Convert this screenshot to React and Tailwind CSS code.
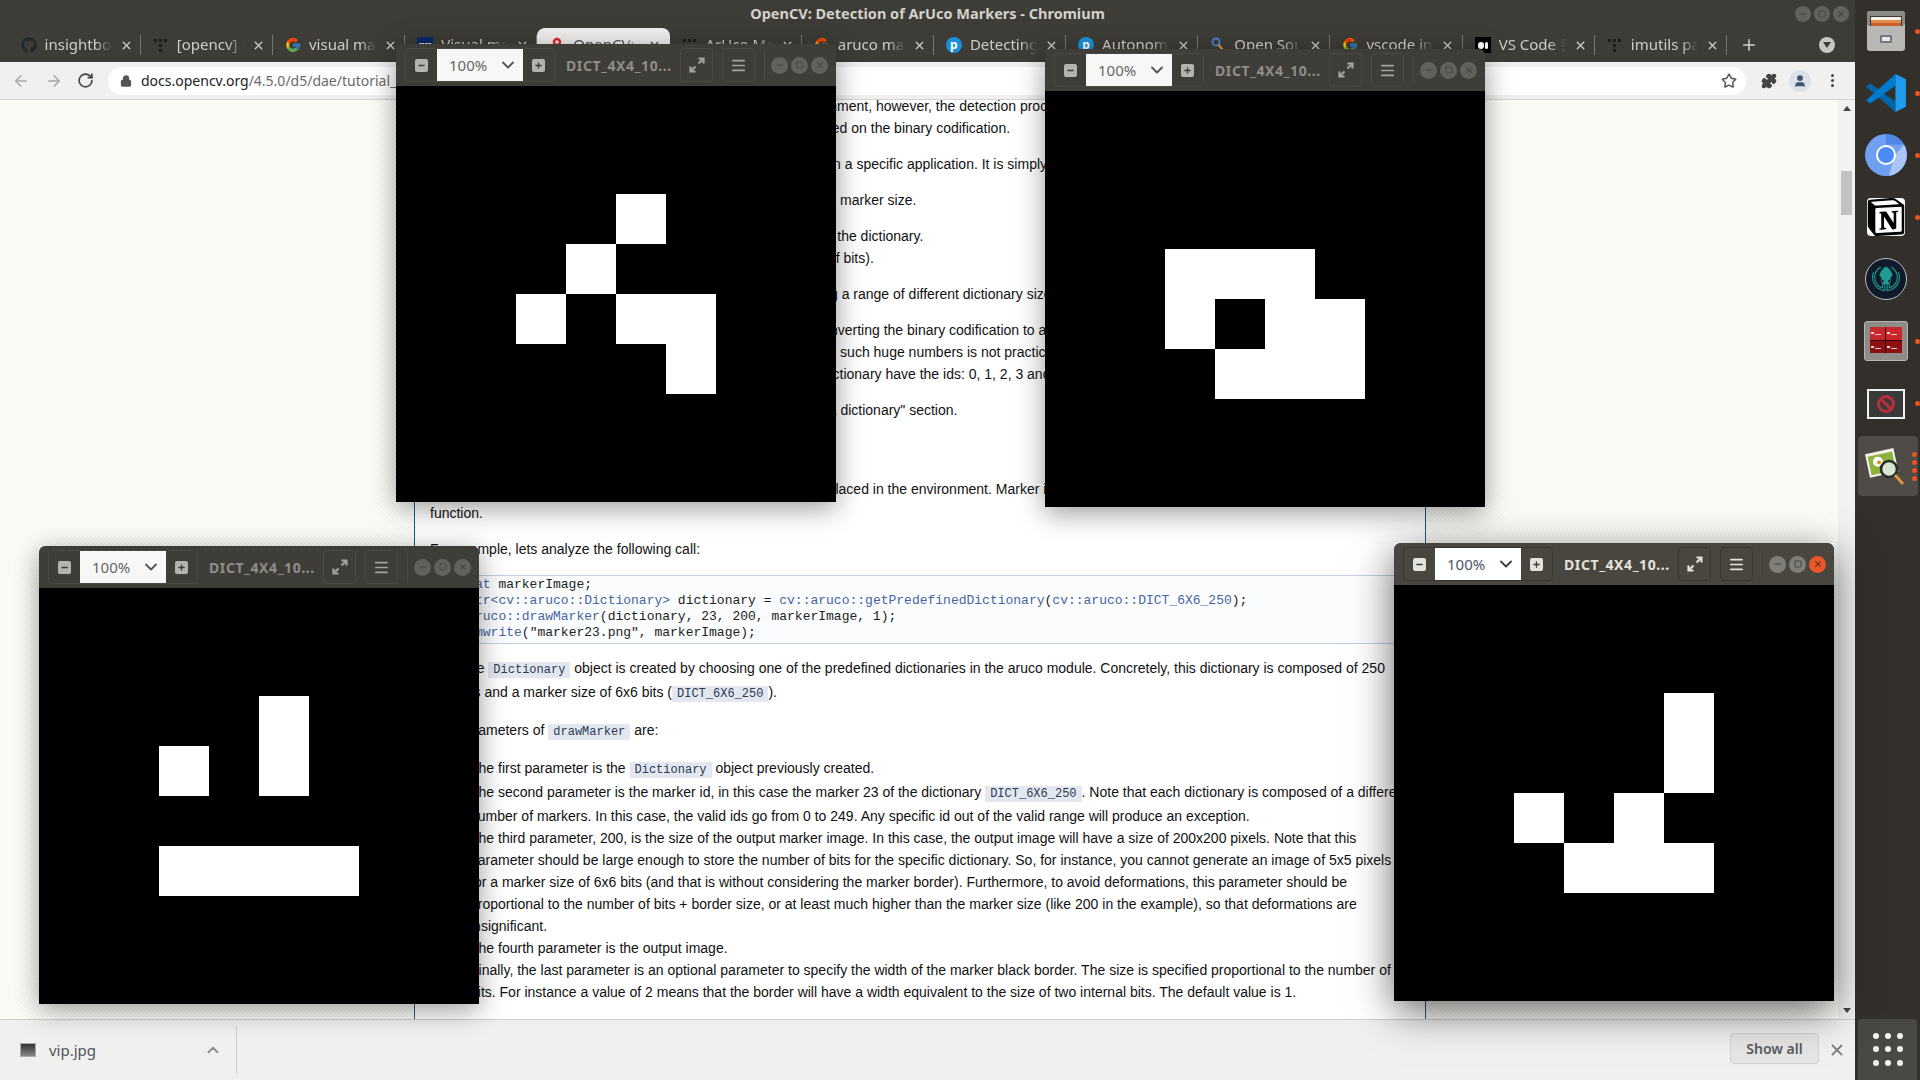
import { ArrowLeft, ArrowRight, RotateCw, Lock, Star, Puzzle, X, Plus, ChevronDown, ChevronUp, Minus, Menu, Square, User } from "lucide-react";
import { FaGithub } from "react-icons/fa";
import { FcGoogle } from "react-icons/fc";
import { SiNotion, SiGitkraken } from "react-icons/si";

const DotsIcon = () => (
  <svg width="16" height="16" viewBox="0 0 16 16" fill="#1c1c1c">
    <rect x="1" y="2" width="3" height="3" />
    <rect x="6" y="2" width="3" height="3" />
    <rect x="11" y="2" width="3" height="3" />
    <rect x="6" y="7" width="3" height="3" />
    <rect x="6" y="12" width="3" height="3" />
  </svg>
);

const IeeeIcon = () => (
  <div className="w-4 h-4 bg-[#0b2a6b] text-white text-[6px] font-bold leading-4 text-center">IEEE</div>
);

const OpencvIcon = () => (
  <svg width="16" height="16" viewBox="0 0 16 16">
    <circle cx="8" cy="5" r="3" fill="none" stroke="#e3242b" strokeWidth="2.4" />
    <circle cx="4.5" cy="11" r="2.4" fill="none" stroke="#2eb24c" strokeWidth="2" />
    <circle cx="11.5" cy="11" r="2.4" fill="none" stroke="#2a6fd6" strokeWidth="2" />
  </svg>
);

const PIcon = () => (
  <div className="w-4 h-4 rounded-full bg-[#1a8fd8] text-white text-[12px] font-bold leading-[15px] text-center">p</div>
);

const PinIcon = () => (
  <svg width="16" height="16" viewBox="0 0 16 16">
    <circle cx="6" cy="5" r="3.5" fill="none" stroke="#4a80c8" strokeWidth="2" />
    <path d="M8.5 8 L14 14" stroke="#d9a441" strokeWidth="2" />
  </svg>
);

const MediumIcon = () => (
  <div className="w-4 h-4 bg-black flex items-center justify-center gap-px">
    <span className="w-[6px] h-[7px] rounded-full bg-white" />
    <span className="w-[3px] h-[7px] rounded-full bg-white" />
  </div>
);

const FullscreenIcon = () => (
  <svg width="18" height="18" viewBox="0 0 18 18" fill="none" stroke="currentColor" strokeWidth="2.2">
    <path d="M10.5 2.5 H15.5 V7.5" />
    <path d="M15 3 L10.5 7.5" />
    <path d="M2.5 10.5 V15.5 H7.5" />
    <path d="M3 15 L7.5 10.5" />
  </svg>
);

const tabs = [
  { icon: <FaGithub size={16} color="#22272e" />, title: "insightboard" },
  { icon: <DotsIcon />, title: "[opencv] Ins" },
  { icon: <FcGoogle size={16} />, title: "visual marker" },
  { icon: <IeeeIcon />, title: "Visual marker" },
  { icon: <OpencvIcon />, title: "OpenCV: Det", active: true },
  { icon: <DotsIcon />, title: "ArUco Marker" },
  { icon: <FcGoogle size={16} />, title: "aruco marker" },
  { icon: <PIcon />, title: "Detecting Ar" },
  { icon: <PIcon />, title: "Autonomous" },
  { icon: <PinIcon />, title: "Open Source" },
  { icon: <FcGoogle size={16} />, title: "vscode insta" },
  { icon: <MediumIcon />, title: "VS Code 문서" },
  { icon: <DotsIcon />, title: "imutils pack" },
];

const Code = ({ children }) => (
  <code className="bg-[#e3e7f0] px-[5px] py-px text-[12px] leading-none text-[#2b3a55] font-['Liberation_Mono',monospace]">{children}</code>
);

const Link = ({ children }) => <span className="text-[#4665a2]">{children}</span>;

function BrowserTab({ tab }) {
  return (
    <div className={`w-[132.2px] h-[34px] shrink-0 flex items-center pl-[12px] ${tab.active ? "bg-[#f1f0ee] rounded-t-lg text-[#4a4a4a]" : "text-[#cfcdc7]"}`}>
      <div className="w-4 h-4 shrink-0">{tab.icon}</div>
      <div className="ml-2 -mt-[2px] w-[67px] shrink-0 overflow-hidden whitespace-nowrap text-[15px] [mask-image:linear-gradient(to_right,black_75%,transparent)]">{tab.title}</div>
      <X size={13} strokeWidth={2.4} className="ml-[8px] shrink-0" />
      {!tab.active && <span className="ml-auto w-px h-5 bg-[#77756f]" />}
    </div>
  );
}

function MarkerWindow({ className, focused, cells }) {
  const tone = focused ? "text-[#e4e2dc]" : "text-[#8f8d87]";
  const iconTone = focused ? "text-[#e4e2dc]" : "text-[#a5a39d]";
  const btn = `border rounded-[4px] ${focused ? "border-[#36352f]" : "border-[#4a4843]"}`;
  const boxTone = focused ? "bg-[#e4e2dc]" : "bg-[#b5b3ad]";
  return (
    <div className={`absolute w-[440px] flex flex-col ${focused ? "shadow-[0_10px_38px_rgba(0,0,0,0.6)]" : "shadow-[0_6px_26px_rgba(0,0,0,0.4)]"} ${className}`}>
      <div className={`h-[42px] flex items-center pl-[9px] rounded-t-md ${focused ? "bg-[#48463f]" : "bg-[#3f3d38]"}`}>
        <div className={`w-[150px] h-[34px] flex items-stretch ${btn}`}>
          <div className="w-[31px] flex items-center justify-center">
            <span className={`w-[13px] h-[13px] rounded-[2px] flex items-center justify-center ${boxTone}`}>
              <Minus size={9} strokeWidth={3.5} color="#3f3d38" />
            </span>
          </div>
          <div className={`w-[86px] flex items-center pl-[12px] text-[15px] font-['Noto_Sans',sans-serif] ${focused ? "bg-white text-[#4a5568]" : "bg-[#f7f7f6] text-[#666]"}`}>
            100%
            <ChevronDown size={20} strokeWidth={2.2} color={focused ? "#3f3d38" : "#55534e"} className="ml-auto mr-[5px]" />
          </div>
          <div className="w-[31px] flex items-center justify-center">
            <span className={`w-[13px] h-[13px] rounded-[2px] flex items-center justify-center ${boxTone}`}>
              <Plus size={9} strokeWidth={3.5} color="#3f3d38" />
            </span>
          </div>
        </div>
        <div className={`ml-[11px] w-[108px] whitespace-nowrap text-[14px] font-bold tracking-[0.6px] font-['Noto_Sans',sans-serif] ${tone}`}>DICT_4X4_10...</div>
        <div className={`ml-[6px] w-[33px] h-[34px] flex items-center justify-center ${btn} ${iconTone}`}>
          <FullscreenIcon />
        </div>
        <div className={`ml-[9px] w-[33px] h-[34px] flex items-center justify-center ${btn} ${iconTone}`}>
          <Menu size={17} strokeWidth={2.4} />
        </div>
        <span className={`ml-[9px] w-px h-[28px] ${focused ? "bg-[#403e38]" : "bg-[#4a4843]"}`} />
        <div className="ml-[6px] flex gap-[3px]">
          <span className={`w-[17px] h-[17px] rounded-full flex items-center justify-center ${focused ? "bg-[#807e78] text-[#3f3d38]" : "bg-[#63615c] text-[#45433e]"}`}><Minus size={10} strokeWidth={2.5} /></span>
          <span className={`w-[17px] h-[17px] rounded-full flex items-center justify-center ${focused ? "bg-[#807e78] text-[#3f3d38]" : "bg-[#63615c] text-[#45433e]"}`}><Square size={8} strokeWidth={2.5} /></span>
          <span className={`w-[17px] h-[17px] rounded-full flex items-center justify-center ${focused ? "bg-[#e9562a] text-[#5a2412]" : "bg-[#63615c] text-[#45433e]"}`}><X size={10} strokeWidth={2.5} /></span>
        </div>
      </div>
      <div className="h-[416px] bg-black flex items-center justify-center">
        <div className="grid grid-cols-4 grid-rows-4 w-[200px] h-[200px]">
          {cells.join("").split("").map((c, i) => (
            <div key={i} className={c === "#" ? "bg-white" : "bg-black"} />
          ))}
        </div>
      </div>
    </div>
  );
}

const FileCabinetIcon = () => (
  <svg width="42" height="42" viewBox="0 0 42 42">
    <rect x="2" y="1" width="38" height="40" rx="3" fill="#b9b8b4" />
    <rect x="2" y="1" width="38" height="15" rx="3" fill="#8b8a86" />
    <rect x="5" y="6" width="32" height="10" fill="#3b3a38" />
    <rect x="6" y="7" width="30" height="3" fill="#f6efe4" />
    <rect x="6" y="10" width="30" height="3" fill="#e08b4c" />
    <rect x="6" y="13" width="30" height="3" fill="#c9602a" />
    <rect x="15" y="25" width="12" height="8" rx="1" fill="#77767b" />
    <rect x="17" y="27" width="8" height="4" fill="#e8e8e8" />
  </svg>
);

const VscodeIcon = () => (
  <svg width="42" height="42" viewBox="0 0 40 40">
    <polygon points="1,14 5,11 29,28 29,38" fill="#0065a9" />
    <polygon points="1,27 29,2 29,13 5,30" fill="#007acc" />
    <polygon points="29,2 39,7 39,33 29,38" fill="#1f9cf0" />
  </svg>
);

const ChromiumIcon = () => (
  <svg width="42" height="42" viewBox="0 0 42 42">
    <circle cx="21" cy="21" r="21" fill="#6f9ff0" />
    <path d="M21 0 A21 21 0 0 1 39 10.5 L21 10.5 Z" fill="#4f86e8" />
    <path d="M39 10.5 A21 21 0 0 1 24 41.8 L30 21 Z" fill="#a9c6f6" />
    <circle cx="21" cy="21" r="10" fill="#ffffff" />
    <circle cx="21" cy="21" r="8" fill="#4c8bf5" />
  </svg>
);

const TerminalPane = ({ tone }) => (
  <div className={`${tone} relative`}>
    <span className="absolute left-px top-[5px] w-[3px] h-[2px] bg-[#f2d0d0]" />
    <span className="absolute left-[5px] top-[7px] w-[6px] h-px bg-[#f2d0d0]" />
  </div>
);

const TerminalsIcon = () => (
  <div className="w-[44px] h-[40px] rounded-[3px] bg-[#8d8c86] border border-[#b5b4ae] p-[5px] pb-[7px]">
    <div className="w-full h-full grid grid-cols-2 grid-rows-2 gap-px bg-[#300]">
      <TerminalPane tone="bg-[#c8282c]" />
      <TerminalPane tone="bg-[#c8282c]" />
      <TerminalPane tone="bg-[#8e0f12]" />
      <TerminalPane tone="bg-[#8e0f12]" />
    </div>
  </div>
);

const BlockIcon = () => (
  <div className="mt-[2px] w-[38px] h-[30px] bg-[#3a3a3a] border-2 border-[#f0f0f0] flex items-center justify-center">
    <svg width="20" height="20" viewBox="0 0 20 20">
      <circle cx="10" cy="10" r="7.5" fill="none" stroke="#b8303c" strokeWidth="3" />
      <path d="M4.7 4.7 L15.3 15.3" stroke="#b8303c" strokeWidth="3" />
    </svg>
  </div>
);

const ViewerIcon = () => (
  <svg width="44" height="44" viewBox="0 0 44 44">
    <g transform="rotate(-12 18 18)">
      <rect x="4" y="7" width="29" height="24" fill="#f3f2ea" />
      <rect x="6" y="10" width="25" height="19" fill="#8fb23c" />
      <circle cx="15" cy="17" r="5" fill="#ffffff" />
      <circle cx="16" cy="18" r="2" fill="#e8891c" />
    </g>
    <circle cx="26" cy="25" r="8" fill="#d8e8d0" stroke="#2c2c2c" strokeWidth="2.6" />
    <path d="M32 31 L40 40" stroke="#d99a3a" strokeWidth="3" />
  </svg>
);

const dock = [
  { icon: <FileCabinetIcon />, dots: 1 },
  { icon: <VscodeIcon />, dots: 1 },
  { icon: <ChromiumIcon />, dots: 1 },
  { icon: <div className="w-[38px] h-[38px] bg-white rounded-[4px] text-black"><SiNotion size={38} /></div>, dots: 1 },
  { icon: <div className="w-[42px] h-[42px] rounded-full bg-[#101a2b] border border-[#b8bcc4] flex items-center justify-center"><SiGitkraken size={28} color="#1f9c92" /></div>, dots: 0 },
  { icon: <TerminalsIcon />, dots: 1 },
  { icon: <BlockIcon />, dots: 1 },
];

export default function App() {
  return (
    <div className="w-[1920px] h-[1080px] relative overflow-hidden flex font-['Liberation_Sans',Arial,sans-serif]">
      {/* Browser */}
      <div className="w-[1855px] h-full flex flex-col">
        {/* Title bar */}
        <div className="h-[28px] bg-[#3e3c37] grid grid-cols-[1fr_auto_1fr] items-center">
          <div />
          <div className="text-[14.5px] font-bold text-[#d3d1cb] font-['Noto_Sans',sans-serif]">OpenCV: Detection of ArUco Markers - Chromium</div>
          <div className="flex justify-end gap-[3px] pr-[6px]">
            <span className="w-4 h-4 rounded-full bg-[#63615c] text-[#45433e] flex items-center justify-center"><Minus size={10} strokeWidth={2.5} /></span>
            <span className="w-4 h-4 rounded-full bg-[#63615c] text-[#45433e] flex items-center justify-center"><Square size={8} strokeWidth={2.5} /></span>
            <span className="w-4 h-4 rounded-full bg-[#63615c] text-[#45433e] flex items-center justify-center"><X size={10} strokeWidth={2.5} /></span>
          </div>
        </div>

        {/* Tabs */}
        <div className="h-[34px] bg-[#3e3c37] flex items-center pl-[8.6px] font-['Noto_Sans',sans-serif]">
          {tabs.map((t, i) => <BrowserTab key={i} tab={t} />)}
          <Plus size={18} strokeWidth={2} color="#d3d1cb" className="ml-[13px]" />
          <span className="ml-auto mr-[20px] w-4 h-4 rounded-full bg-[#c8c6c0] flex items-center justify-center">
            <svg width="8" height="6" viewBox="0 0 8 6"><path d="M0 0 H8 L4 6 Z" fill="#3e3c37" /></svg>
          </span>
        </div>

        {/* Toolbar */}
        <div className="h-[38px] bg-[#f1f0ee] border-b border-[#d4d3d1] flex items-center pl-[12px] text-[#5f6368]">
          <ArrowLeft size={18} className="text-[#a8a8a6]" />
          <ArrowRight size={18} className="ml-[15px] text-[#a8a8a6]" />
          <RotateCw size={17} strokeWidth={2.4} className="ml-[14px] text-[#444]" />
          <div className="ml-[14px] w-[1638px] h-[28px] rounded-full bg-white flex items-center pl-[12px]">
            <Lock size={12} strokeWidth={2.6} fill="#555" className="text-[#555]" />
            <span className="ml-[9px] text-[14px] text-[#222] font-['Noto_Sans',sans-serif]">docs.opencv.org<span className="text-[#6b6b6b]">/4.5.0/d5/dae/tutorial_aruco_detection.html</span></span>
            <Star size={16} strokeWidth={2.2} className="ml-auto mr-[9px] text-[#555]" />
          </div>
          <Puzzle size={16} fill="#444" className="ml-[15px] text-[#444]" />
          <span className="ml-[12px] w-[22px] h-[22px] rounded-full bg-[#dde1e9] flex items-center justify-center"><User size={14} fill="#3f5272" className="text-[#3f5272]" /></span>
          <div className="ml-[20px] flex flex-col gap-[2px]">
            <span className="w-[3px] h-[3px] rounded-full bg-[#444]" />
            <span className="w-[3px] h-[3px] rounded-full bg-[#444]" />
            <span className="w-[3px] h-[3px] rounded-full bg-[#444]" />
          </div>
        </div>

        {/* Page */}
        <div className="h-[919px] flex overflow-hidden bg-white">
          <div className="flex-1 bg-[repeating-conic-gradient(#f7f8ee_0_25%,#ffffff_0_50%)] bg-[length:4px_4px]">
            <div className="ml-[414px] w-[1012px] h-full bg-white border-x border-[#1f5a85] pl-[15px] text-[14px] leading-[22px] text-[#111] overflow-hidden whitespace-nowrap">
              <div className="-mt-[5px]">
                It must be noted that a marker can be found rotated in the environment, however, the detection process needs to be able to determine its original rotation, so<br />
                that each corner is identified unequivocally. This is also done based on the binary codification.
              </div>
              <div className="mt-[14px]">A dictionary of markers is the set of markers that are considered in a specific application. It is simply the list of binary codifications of each of its markers.</div>
              <div className="mt-[14px]">The main properties of a dictionary are the dictionary size and the marker size.</div>
              <div className="mt-[14px] ml-[40px]">
                The dictionary size is the number of markers that compose the dictionary.<br />
                The marker size is the size of those markers (the number of bits).
              </div>
              <div className="mt-[14px]">The aruco module includes some predefined dictionaries covering a range of different dictionary sizes and marker sizes.</div>
              <div className="mt-[14px]">
                <div>One may think that the marker id is the number obtained from converting the binary codification to a decimal base number. However, this is not possible since</div>
                <div>for high marker sizes the number of bits is too high and managing such huge numbers is not practical. Instead, a marker id is simply the marker index within</div>
                <div className="-ml-[6px]">the dictionary it belongs to. For instance, the first 5 markers in a dictionary have the ids: 0, 1, 2, 3 and 4.</div>
              </div>
              <div className="mt-[14px]">More information about dictionaries is provided in the "Selecting a dictionary" section.</div>
              <div className="mt-[25px] text-[18px] leading-[24px] font-bold">Marker Creation</div>
              <div className="mt-[7px] leading-[25px]">Before detecting markers, they need to be printed in order to be placed in the environment. Marker images can be generated using the drawMarker()</div>
              <div>function.</div>
              <div className="mt-[14px]">For example, lets analyze the following call:</div>

              <div className="-ml-[15px] mt-[15px] w-[1010px] h-[69px] bg-[#fbfcfd] border-y border-[#c4cfe5] pt-[1px] pl-[21px] text-[13px] leading-[16px] text-[#222] font-['Liberation_Mono',monospace]">
                <div><Link>cv::Mat</Link> markerImage;</div>
                <div><Link>cv::Ptr&lt;cv::aruco::Dictionary&gt;</Link> dictionary = <Link>cv::aruco::getPredefinedDictionary</Link>(<Link>cv::aruco::DICT_6X6_250</Link>);</div>
                <div><Link>cv::aruco::drawMarker</Link>(dictionary, 23, 200, markerImage, 1);</div>
                <div><Link>cv::imwrite</Link>("marker23.png", markerImage);</div>
              </div>

              <div className="mt-[12px] leading-[24px]">First, the <Code>Dictionary</Code> object is created by choosing one of the predefined dictionaries in the aruco module. Concretely, this dictionary is composed of 250</div>
              <div className="leading-[24px]">markers and a marker size of 6x6 bits (<Code>DICT_6X6_250</Code>).</div>
              <div className="mt-[14px] leading-[24px]">The parameters of <Code>drawMarker</Code> are:</div>
              <div className="mt-[14px] ml-[40px]">
                <div className="leading-[24px]">The first parameter is the <Code>Dictionary</Code> object previously created.</div>
                <div className="leading-[24px]">The second parameter is the marker id, in this case the marker 23 of the dictionary <Code>DICT_6X6_250</Code>. Note that each dictionary is composed of a different</div>
                <div className="mt-px">number of markers. In this case, the valid ids go from 0 to 249. Any specific id out of the valid range will produce an exception.</div>
                <div>The third parameter, 200, is the size of the output marker image. In this case, the output image will have a size of 200x200 pixels. Note that this</div>
                <div>parameter should be large enough to store the number of bits for the specific dictionary. So, for instance, you cannot generate an image of 5x5 pixels</div>
                <div>for a marker size of 6x6 bits (and that is without considering the marker border). Furthermore, to avoid deformations, this parameter should be</div>
                <div>proportional to the number of bits + border size, or at least much higher than the marker size (like 200 in the example), so that deformations are</div>
                <div>insignificant.</div>
                <div>The fourth parameter is the output image.</div>
                <div>Finally, the last parameter is an optional parameter to specify the width of the marker black border. The size is specified proportional to the number of</div>
                <div>bits. For instance a value of 2 means that the border will have a width equivalent to the size of two internal bits. The default value is 1.</div>
              </div>
            </div>
          </div>
          {/* Scrollbar */}
          <div className="w-[17px] bg-[#f1f1f1] flex flex-col items-center pt-[6px] pb-[6px]">
            <svg width="8" height="5" viewBox="0 0 8 5"><path d="M4 0 L8 5 H0 Z" fill="#444" /></svg>
            <div className="mt-[60px] w-[11px] h-[44px] bg-[#c1c1c1]" />
            <svg width="8" height="5" viewBox="0 0 8 5" className="mt-auto"><path d="M0 0 H8 L4 5 Z" fill="#444" /></svg>
          </div>
        </div>

        {/* Download bar */}
        <div className="h-[61px] bg-[#f1f0ee] border-t border-[#cfcecb] flex items-center font-['Noto_Sans',sans-serif]">
          <div className="ml-[20px] w-[16px] h-[14px] border border-[#a9a9a9] bg-gradient-to-b from-[#333] to-[#888]" />
          <span className="ml-[13px] text-[15px] text-[#4d5560]">vip.jpg</span>
          <ChevronUp size={18} strokeWidth={2.4} className="ml-[108px] text-[#8c8c8c]" />
          <span className="ml-[14px] w-px h-[48px] bg-[#cfcecb]" />
          <div className="ml-auto mb-[3px] w-[89px] h-[31px] rounded-[4px] bg-[#e6e5e3] border border-[#d3d2d0] flex items-center justify-center text-[14px] font-semibold text-[#555b63]">Show all</div>
          <X size={18} strokeWidth={2.4} className="ml-[9px] mr-[9px] mb-px text-[#80807e]" />
        </div>
      </div>

      {/* Dock */}
      <div className="w-[65px] h-full bg-[#33302c] flex flex-col">
        {dock.map((d, i) => (
          <div key={i} className="h-[62px] w-full flex items-center shrink-0">
            <div className="w-[60px] flex items-center justify-center pl-[1px]">{d.icon}</div>
            {d.dots > 0 && <span className="w-[5px] h-[5px] rounded-full bg-[#e9541f]" />}
          </div>
        ))}
        <div className="mt-[2px] ml-[3px] w-[60px] h-[60px] rounded-[4px] bg-[#4f4c47] flex items-center">
          <div className="w-[54px] flex justify-center"><ViewerIcon /></div>
          <div className="flex flex-col gap-[3px]">
            <span className="w-[5px] h-[5px] rounded-full bg-[#e9541f]" />
            <span className="w-[5px] h-[5px] rounded-full bg-[#e9541f]" />
            <span className="w-[5px] h-[5px] rounded-full bg-[#e9541f]" />
            <span className="w-[5px] h-[5px] rounded-full bg-[#e9541f]" />
          </div>
        </div>
        <div className="mt-auto ml-[3px] w-[59px] h-[61px] rounded-t-[4px] bg-[#4a4843] grid grid-cols-3 gap-[5px] px-[14px] py-[13px]">
          {[0, 1, 2, 3, 4, 5, 6, 7, 8].map((i) => (
            <span key={i} className="w-[6px] h-[6px] rounded-full bg-[#f3f2ef] self-center justify-self-center" />
          ))}
        </div>
      </div>

      {/* Marker windows */}
      <MarkerWindow className="left-[396px] top-[44px]" cells={["..#.", ".#..", "#.##", "...#"]} />
      <MarkerWindow className="left-[1045px] top-[49px]" cells={["....", "###.", "#.##", ".###"]} />
      <MarkerWindow className="left-[39px] top-[546px]" cells={["..#.", "#.#.", "....", "####"]} />
      <MarkerWindow className="left-[1394px] top-[543px]" focused cells={["...#", "...#", "#.#.", ".###"]} />
    </div>
  );
}
